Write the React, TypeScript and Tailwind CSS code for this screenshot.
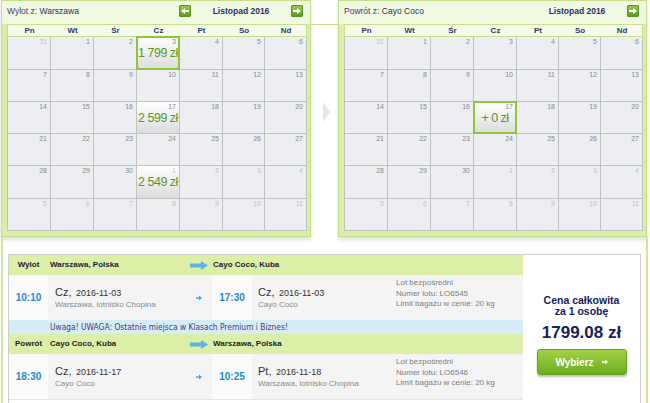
type Cell = { d: number; faded?: boolean; price?: string; selected?: boolean };
type Special = Record<string, { price: string; selected?: boolean }>;

const ROW_H = ["h-[33px]", "h-[32px]", "h-[32px]", "h-[32px]", "h-[33px]", "h-[32px]"];
const DAYS = ["Pn", "Wt", "Śr", "Cz", "Pt", "So", "Nd"];

// listopad 2016 starts on a Tuesday
const buildWeeks = (specials: Special): Cell[][] => {
  const rows: Cell[][] = [];
  for (let r = 0; r < 6; r++) {
    const row: Cell[] = [];
    for (let c = 0; c < 7; c++) {
      const n = r * 7 + c; // 0 -> Oct 31
      let d = n;
      let faded = false;
      if (n === 0) {
        d = 31;
        faded = true;
      } else if (n > 30) {
        d = n - 30;
        faded = true;
      }
      row.push({ d, faded, ...specials[`${r}-${c}`] });
    }
    rows.push(row);
  }
  return rows;
};

const NavBtn = ({ dir, hidden }: { dir: "l" | "r"; hidden?: boolean }) => (
  <div
    className={`w-[12px] h-[12px] rounded-[1px] border border-[#5a9620] bg-gradient-to-b from-[#93ca4d] to-[#5d9b21] flex items-center justify-center ${
      hidden ? "invisible" : ""
    }`}
  >
    <svg width="8" height="6" viewBox="0 0 8 6">
      <path d={dir === "r" ? "M0 2h4V0l4 3-4 3V4H0z" : "M8 2H4V0L0 3l4 3V4h4z"} fill="#fff" />
    </svg>
  </div>
);

const Calendar = ({
  title,
  place,
  prev,
  specials,
  cols,
  panelCls,
}: {
  title: string;
  place: string;
  prev?: boolean;
  specials: Special;
  cols: string;
  panelCls: string;
}) => {
  const weeks = buildWeeks(specials);
  return (
    <div className={`${panelCls} border border-[#c3df88] bg-[#d9eea9] shadow-[0_3px_4px_rgba(0,0,0,0.13)]`}>
      {/* title + month nav */}
      <div className="h-[23px] bg-[#f2f9e3] flex items-start pt-[4px] pl-[5px] pr-[7px]">
        <div className="flex-1 text-[8.5px] leading-[12px] text-[#3d4566]">
          {title} <span className="text-[#283260]">{place}</span>
        </div>
        <div className="w-[124px] flex items-center">
          <NavBtn dir="l" hidden={!prev} />
          <div className="flex-1 text-center text-[8.5px] leading-[12px] font-bold text-[#2b3466]">Listopad 2016</div>
          <NavBtn dir="r" />
        </div>
      </div>

      <div className="pl-[5px] pr-[3px] pb-[5px]">
        {/* day names */}
        <div className={`grid ${cols} h-[13px] border border-[#c5e18a] bg-[#f6fce9]`}>
          {DAYS.map((d) => (
            <div key={d} className="text-center text-[8px] leading-[11px] font-bold text-[#2e3a6b]">
              {d}
            </div>
          ))}
        </div>
        {/* day cells */}
        <div className="border-l border-[#c2c2c2]">
          {weeks.map((row, r) => (
            <div key={r} className={`grid ${cols} ${ROW_H[r]}`}>
              {row.map((cell, c) => (
                <div
                  key={c}
                  className={`relative border-r border-b border-[#c2c2c2] ${
                    cell.price ? "bg-gradient-to-b from-white to-[#dcdcdc]" : "bg-[#eceef1]"
                  }`}
                >
                  <div
                    className={`text-right pr-[3px] pt-[1px] text-[7px] leading-[8px] ${
                      cell.faded ? "text-[#c4c4c4]" : "text-[#8a8a8a]"
                    }`}
                  >
                    {cell.d}
                  </div>
                  {cell.price && (
                    <div className="text-center text-[12.5px] leading-[15px] tracking-[-0.5px] text-[#5a9a1f] whitespace-nowrap">
                      {cell.price}
                    </div>
                  )}
                  {cell.selected && <div className="absolute -inset-[1px] border-2 border-[#8cc63f]" />}
                </div>
              ))}
            </div>
          ))}
        </div>
      </div>
    </div>
  );
};

const BigArrow = () => (
  <svg width="18" height="9" viewBox="0 0 18 9">
    <path d="M0 2.5h11V0l7 4.5-7 4.5V6.5H0z" fill="#5bb5ec" />
  </svg>
);

const SmallArrow = ({ color = "#4aa8e0" }: { color?: string }) => (
  <svg width="6" height="6" viewBox="0 0 6 6">
    <path d="M0 2.2h3V0.5L6 3 3 5.5V3.8H0z" fill={color} />
  </svg>
);

const LegHeader = ({ label, from, to }: { label: string; from: string; to: string }) => (
  <div className="flex h-[20px] items-center bg-[#dcefa6] text-[8px] font-bold text-[#1d2230]">
    <div className="w-[39px] text-center">{label}</div>
    <div className="w-[137px] pl-[2px]">{from}</div>
    <div className="w-[27px] flex justify-center">
      <BigArrow />
    </div>
    <div className="flex-1 pl-[1px]">{to}</div>
  </div>
);

const LegRow = ({
  dep,
  depDay,
  depDate,
  depPlace,
  arr,
  arrDay,
  arrDate,
  arrPlace,
  flight,
}: {
  dep: string;
  depDay: string;
  depDate: string;
  depPlace: string;
  arr: string;
  arrDay: string;
  arrDate: string;
  arrPlace: string;
  flight: string;
}) => (
  <div className="flex h-[45px]">
    <div className="w-[39px] flex items-center justify-center bg-[#fbfbfb] text-[10px] font-bold text-[#2289d1]">{dep}</div>
    <div className="w-[137px] bg-[#f4f4f4] pl-[7px] flex flex-col justify-center">
      <div className="leading-[12px] text-[#333]">
        <span className="text-[11px]">{depDay},</span> <span className="text-[9px]">{depDate}</span>
      </div>
      <div className="text-[8px] leading-[11px] text-[#8a8a8a] whitespace-nowrap">{depPlace}</div>
    </div>
    <div className="w-[27px] bg-[#f4f4f4] flex items-center justify-center">
      <SmallArrow />
    </div>
    <div className="w-[40px] flex items-center justify-center bg-[#fbfbfb] text-[10px] font-bold text-[#2289d1]">{arr}</div>
    <div className="w-[138px] bg-[#f4f4f4] pl-[6px] flex flex-col justify-center">
      <div className="leading-[12px] text-[#333]">
        <span className="text-[11px]">{arrDay},</span> <span className="text-[9px]">{arrDate}</span>
      </div>
      <div className="text-[8px] leading-[11px] text-[#8a8a8a] whitespace-nowrap">{arrPlace}</div>
    </div>
    <div className="flex-1 bg-[#f4f4f4] pl-[6px] pt-[3px] text-[8px] leading-[10.5px] text-[#7d7d7d]">
      <div>Lot bezpośredni</div>
      <div>Numer lotu: {flight}</div>
      <div>Limit bagażu w cenie: 20 kg</div>
    </div>
  </div>
);

export default function App() {
  return (
    <div className="w-[650px] h-[403px] overflow-hidden bg-white font-['Liberation_Sans',Arial,sans-serif]">
      {/* calendars */}
      <div className="flex items-start h-[237px]">
        <Calendar
          title="Wylot z:"
          place="Warszawa"
          prev
          panelCls="ml-[1px] w-[310px]"
          cols="grid-cols-[43px_43px_43px_43px_43px_42px_42px]"
          specials={{
            "0-3": { price: "1 799 zł", selected: true },
            "2-3": { price: "2 599 zł" },
            "4-3": { price: "2 549 zł" },
          }}
        />
        <div className="w-[27px] flex flex-col">
          <div className="mt-[24px] h-[1px] bg-[#c3df88]" />
          <div className="mt-[77px] ml-[12px] w-0 h-0 border-y-[10px] border-y-transparent border-l-[7px] border-l-[#dfe5ec]" />
        </div>
        <Calendar
          title="Powrót z:"
          place="Cayo Coco"
          panelCls="w-[309px]"
          cols="grid-cols-[43px_43px_43px_43px_42px_42px_42px]"
          specials={{ "2-3": { price: "+ 0 zł", selected: true } }}
        />
      </div>

      {/* flight summary */}
      <div className="flex h-[166px]">
        <div className="ml-[1px] w-[2px] bg-[#cde69a]" />
        <div className="ml-[5px] mt-[17px] w-[633px] flex border-t border-x border-[#cfcfcf]">
          <div className="w-[514px]">
            <LegHeader label="Wylot" from="Warszawa, Polska" to="Cayo Coco, Kuba" />
            <LegRow
              dep="10:10"
              depDay="Cz"
              depDate="2016-11-03"
              depPlace="Warszawa, lotnisko Chopina"
              arr="17:30"
              arrDay="Cz"
              arrDate="2016-11-03"
              arrPlace="Cayo Coco"
              flight="LO6545"
            />
            <div className="h-[14px] bg-[#d6ecf8] pl-[41px] text-[8.4px] leading-[14px] text-[#4b3b73] font-['DejaVu_Sans_Condensed','DejaVu_Sans',sans-serif] whitespace-nowrap">
              Uwaga! UWAGA: Ostatnie miejsca w Klasach Premium i Biznes!
            </div>
            <LegHeader label="Powrót" from="Cayo Coco, Kuba" to="Warszawa, Polska" />
            <LegRow
              dep="18:30"
              depDay="Cz"
              depDate="2016-11-17"
              depPlace="Cayo Coco"
              arr="10:25"
              arrDay="Pt"
              arrDate="2016-11-18"
              arrPlace="Warszawa, lotnisko Chopina"
              flight="LO6546"
            />
            <div className="h-[1px] bg-[#dde7ee]" />
          </div>
          <div className="flex-1 flex flex-col items-center pt-[40px]">
            <div className="text-[10.5px] leading-[11px] font-bold text-[#142260] text-center">
              Cena całkowita
              <br />
              za 1 osobę
            </div>
            <div className="mt-[6px] text-[17px] leading-[20px] font-bold text-[#142260]">1799.08 zł</div>
            <div className="mt-[6px] w-[90px] h-[26px] rounded-[3px] border border-[#66a31b] bg-gradient-to-b from-[#a2d246] to-[#6cad1c] shadow-[0_2px_2px_rgba(0,0,0,0.25)] flex items-center justify-center gap-[8px] text-[10px] font-bold text-white">
              <span>Wybierz</span>
              <SmallArrow color="#fff" />
            </div>
          </div>
        </div>
        <div className="ml-[5px] w-[2px] bg-[#cde69a]" />
      </div>
    </div>
  );
}
